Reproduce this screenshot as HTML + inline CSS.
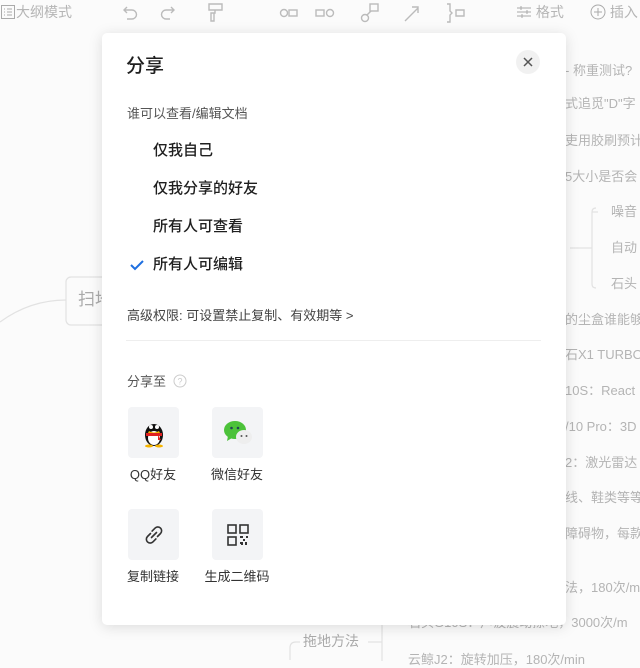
<!DOCTYPE html>
<html><head><meta charset="utf-8">
<style>
*{margin:0;padding:0;box-sizing:border-box}
body{width:640px;height:661px;overflow:hidden;background:#fbfbfb;font-family:"Liberation Sans","Noto Sans CJK SC",sans-serif;position:relative}
.t{position:absolute;white-space:nowrap;color:#b4b4b4;font-size:13px;line-height:16px}
.tb{position:absolute;color:#b5b5b5;font-size:14px;line-height:16px;white-space:nowrap}
.modal{position:absolute;left:102px;top:33px;width:464px;height:592px;background:#fff;border-radius:5px;box-shadow:0 2px 14px rgba(0,0,0,.13);z-index:5}
.m{position:absolute;white-space:nowrap}
.opt{position:absolute;left:51px;font-size:15px;color:#1f1f1f;font-weight:500;line-height:18px}
.tile{position:absolute;width:51px;height:51px;background:#f3f4f6;border-radius:4px;display:flex;align-items:center;justify-content:center}
.lab{position:absolute;font-size:13px;color:#333;width:80px;text-align:center;line-height:16px}
</style></head><body>
<!-- toolbar -->
<div class="tb" style="left:0;top:4px">
<svg width="16" height="16" style="vertical-align:-3px"><rect x="1.5" y="1.5" width="13" height="13" fill="none" stroke="#aaa"/><path d="M4 5h1M7 5h5M4 8h1M7 8h5M4 11h1M7 11h5" stroke="#aaa"/></svg>大纲模式</div>
<svg style="position:absolute;left:120px;top:1px" width="520" height="24" fill="none" stroke="#bbb" stroke-width="1.4">
<path d="M7 6l-3 3 3 3M4 9h8a4.5 4.5 0 010 9H7"/>
<path d="M51 6l3 3-3 3M54 9h-8a4.5 4.5 0 000 9h4"/>
<path d="M89 3h13v6H89zM95 9v3h-4v8h3v-8"/>
<circle cx="164" cy="12" r="3.5"/><rect x="169" y="9" width="8" height="6"/>
<rect x="196" y="9" width="8" height="6"/><circle cx="210" cy="12" r="3.5"/>
<circle cx="245" cy="17" r="3.5"/><rect x="250" y="3" width="8" height="7"/><path d="M247 14l4-4"/>
<path d="M285 20l13-13M292 6h6v6"/>
<path d="M327 3h3v7l2 2-2 2v7h-3M336 9h8v6h-8z"/>
</svg>
<div class="tb" style="left:516px;top:4px"><svg width="16" height="14" style="vertical-align:-2px" stroke="#aaa" fill="none"><path d="M1 3h14M1 7h14M1 11h14M5 1v4M11 5v4M6 9v4"/></svg> 格式</div>
<div class="tb" style="left:590px;top:4px"><svg width="16" height="16" style="vertical-align:-3px" stroke="#aaa" fill="none"><circle cx="8" cy="8" r="7"/><path d="M8 4v8M4 8h8"/></svg> 插入</div>

<!-- background mindmap -->
<svg style="position:absolute;left:0;top:0" width="640" height="661" fill="none" stroke="#e2e2e2" stroke-width="1.2">
<path d="M0 322 Q30 300 66 300"/>
<rect x="66" y="277" width="50" height="48" rx="5"/>
<path d="M570 248h22M592 212h6M592 212v72M592 212q0 -4 4 -4M592 284q0 4 4 4"/>
<path d="M290 660v-12q0-6 6-6h4M368 642h14M382 618v43"/>
</svg>
<div class="t" style="left:78px;top:290px;font-size:17px;line-height:20px;color:#aaa">扫地</div>
<div class="t" style="left:565px;top:63px">- 称重测试?</div>
<div class="t" style="left:565px;top:96px">式追觅"D"字</div>
<div class="t" style="left:565px;top:133px">吏用胶刷预计</div>
<div class="t" style="left:565px;top:169px">5大小是否会</div>
<div class="t" style="left:611px;top:204px">噪音</div>
<div class="t" style="left:611px;top:240px">自动</div>
<div class="t" style="left:611px;top:276px">石头</div>
<div class="t" style="left:565px;top:312px">的尘盒谁能够</div>
<div class="t" style="left:565px;top:347px">石X1 TURBO</div>
<div class="t" style="left:565px;top:383px">10S：React</div>
<div class="t" style="left:565px;top:419px">/10 Pro：3D</div>
<div class="t" style="left:565px;top:455px">2：激光雷达</div>
<div class="t" style="left:565px;top:490px">线、鞋类等等</div>
<div class="t" style="left:565px;top:526px">障碍物，每款</div>
<div class="t" style="left:565px;top:580px">法，180次/m</div>
<div class="t" style="left:408px;top:615px">石头G10S：声波震动擦地，3000次/m</div>
<div class="t" style="left:303px;top:633px;font-size:14px;color:#aaa">拖地方法</div>
<div class="t" style="left:408px;top:652px">云鲸J2：旋转加压，180次/min</div>

<!-- modal -->
<div class="modal">
<div class="m" style="left:24px;top:22px;font-size:19px;color:#1f1f1f;font-weight:500;line-height:24px">分享</div>
<div class="m" style="left:414px;top:17px;width:24px;height:24px;border-radius:50%;background:#f1f1f1">
<svg width="24" height="24" stroke="#555" stroke-width="1.5"><path d="M8 8l8 8M16 8l-8 8"/></svg></div>
<div class="m" style="left:25px;top:70px;font-size:13px;color:#555">谁可以查看/编辑文档</div>
<div class="opt" style="top:109px">仅我自己</div>
<div class="opt" style="top:147px">仅我分享的好友</div>
<div class="opt" style="top:185px">所有人可查看</div>
<div class="opt" style="top:223px">所有人可编辑</div>
<svg class="m" style="left:27px;top:225px" width="16" height="14"><path d="M2 7l4 4 8-8" stroke="#1e6fe0" stroke-width="2" fill="none"/></svg>
<div class="m" style="left:25px;top:272px;font-size:13px;color:#444">高级权限: 可设置禁止复制、有效期等 &gt;</div>
<div class="m" style="left:24px;top:307px;width:415px;height:1px;background:#eee"></div>
<div class="m" style="left:25px;top:338px;font-size:13px;color:#555">分享至 <svg width="14" height="14" style="vertical-align:-2px;margin-left:3px"><circle cx="7" cy="7" r="6" fill="none" stroke="#ccc"/><text x="7" y="10.5" font-size="9" fill="#ccc" text-anchor="middle" font-family="Liberation Sans">?</text></svg></div>

<div class="tile" style="left:26px;top:374px"><svg width="28" height="30" viewBox="0 0 28 30">
<ellipse cx="14" cy="17" rx="9" ry="11" fill="#111"/><ellipse cx="14" cy="20" rx="6" ry="7" fill="#fff"/>
<circle cx="11" cy="9" r="2" fill="#fff"/><circle cx="17" cy="9" r="2" fill="#fff"/>
<path d="M9 13q5 3 10 0l1 2q-6 3-12 0z" fill="#f5b400"/><path d="M6 15h16v3H6z" fill="#e02020"/><path d="M18 17l3 5-3 0z" fill="#e02020"/>
<ellipse cx="9" cy="28" rx="4" ry="1.5" fill="#f5b400"/><ellipse cx="19" cy="28" rx="4" ry="1.5" fill="#f5b400"/></svg></div>
<div class="tile" style="left:110px;top:374px"><svg width="30" height="26" viewBox="0 0 30 26">
<ellipse cx="12" cy="10" rx="11" ry="9" fill="#4cc23a"/><path d="M5 16l-1 5 5-3z" fill="#4cc23a"/>
<circle cx="8.5" cy="8" r="1.3" fill="#245"/><circle cx="15" cy="8" r="1.3" fill="#245"/>
<ellipse cx="21" cy="17" rx="8" ry="7" fill="#eee"/><circle cx="18.5" cy="16" r="1" fill="#555"/><circle cx="23.5" cy="16" r="1" fill="#555"/></svg></div>
<div class="lab" style="left:11px;top:434px">QQ好友</div>
<div class="lab" style="left:95px;top:434px">微信好友</div>

<div class="tile" style="left:26px;top:476px"><svg width="26" height="26" fill="none" stroke="#333" stroke-width="1.6" stroke-linecap="round">
<path d="M10.5 15.5l5-5"/><path d="M9.5 11.5l-3 3a3.8 3.8 0 005.4 5.4l3-3"/><path d="M16.5 14.5l3-3a3.8 3.8 0 00-5.4-5.4l-3 3"/></svg></div>
<div class="tile" style="left:110px;top:476px"><svg width="24" height="24" fill="none" stroke="#333" stroke-width="1.6">
<rect x="2" y="2" width="8" height="8"/><rect x="14" y="2" width="8" height="8"/><rect x="2" y="14" width="8" height="8"/>
<path d="M14 14h3M20 14h2M17 17h2M14 20h2v2M20 19v3" stroke-width="2"/></svg></div>
<div class="lab" style="left:11px;top:536px">复制链接</div>
<div class="lab" style="left:95px;top:536px">生成二维码</div>
</div>
</body></html>
